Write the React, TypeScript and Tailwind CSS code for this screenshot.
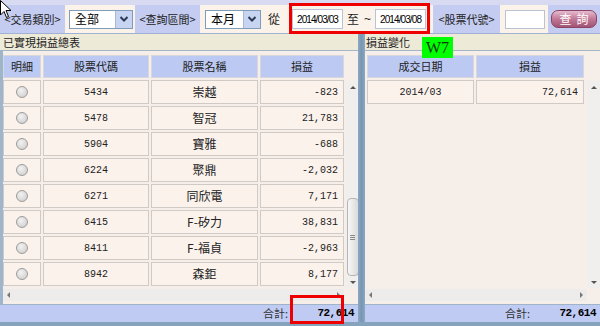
const cjk = "font-['Noto_Sans_CJK_TC','Noto_Sans',sans-serif]";
const mono = "font-['Liberation_Mono','DejaVu_Sans_Mono',monospace]";

const rows = [
  { code: "5434", name: "崇越", pl: "-823" },
  { code: "5478", name: "智冠", pl: "21,783" },
  { code: "5904", name: "寶雅", pl: "-688" },
  { code: "6224", name: "聚鼎", pl: "-2,032" },
  { code: "6271", name: "同欣電", pl: "7,171" },
  { code: "6415", name: "F-矽力", pl: "38,831" },
  { code: "8411", name: "F-福貞", pl: "-2,963" },
  { code: "8942", name: "森鉅", pl: "8,177" },
];

function Chevron() {
  return (
    <svg width="10" height="8" viewBox="0 0 10 8">
      <polyline points="1.5,2 5,5.5 8.5,2" fill="none" stroke="#2b3a55" strokeWidth="2" />
    </svg>
  );
}

function Select({ value, width }: { value: string; width: string }) {
  return (
    <div className={`${width} h-[19px] bg-white border border-[#7f9db9] flex items-center`}>
      <span className={`flex-1 pl-[5px] text-[12px] text-black ${cjk} leading-none`}>{value}</span>
      <div className="w-[17px] h-[17px] bg-[#c7d5f3] border-l border-[#aab8d8] flex items-center justify-center">
        <Chevron />
      </div>
    </div>
  );
}

function Label({ text, width }: { text: string; width: string }) {
  return (
    <div className={`${width} h-full bg-[#c4ccf1] flex items-center justify-center text-[11px] text-[#222] ${cjk}`}>
      {text}
    </div>
  );
}

function DateBox({ value }: { value: string }) {
  return (
    <div className="w-[51px] h-[20px] bg-white border border-[#b8c4d4] flex items-center justify-center text-[10px] tracking-[-0.9px] font-['Liberation_Sans',sans-serif] text-black whitespace-nowrap overflow-hidden">
      {value}
    </div>
  );
}

function Radio() {
  return (
    <div className="w-[12px] h-[12px] rounded-full border border-[#9c9c9c] bg-[radial-gradient(circle_at_40%_35%,#f2f2f2,#c9c9c9)]" />
  );
}

function VScroll({ thumb }: { thumb: boolean }) {
  return (
    <div className="w-[13px] h-full bg-[#f1efed] flex flex-col items-center">
      <div className="h-[12px] flex items-center justify-center">
        <div className="w-0 h-0 border-l-[3px] border-r-[3px] border-b-[3px] border-l-transparent border-r-transparent border-b-[#555]" />
      </div>
      <div className="flex-1 w-full flex flex-col justify-end">
        {thumb && (
          <div className="mx-auto w-[12px] h-[78px] rounded-[4px] border border-[#b4b4b4] bg-gradient-to-r from-[#f7f7f7] to-[#dadada] flex items-center justify-center">
            <div className="flex flex-col gap-[1px]">
              <div className="w-[5px] h-px bg-[#888]" />
              <div className="w-[5px] h-px bg-[#888]" />
              <div className="w-[5px] h-px bg-[#888]" />
            </div>
          </div>
        )}
      </div>
      <div className="h-[12px] flex items-center justify-center">
        <div className="w-0 h-0 border-l-[3px] border-r-[3px] border-t-[3px] border-l-transparent border-r-transparent border-t-[#555]" />
      </div>
    </div>
  );
}

function HScroll({ width }: { width: string }) {
  return (
    <div className="h-[12px] flex">
      <div className={`${width} h-full bg-[#eeecea] flex items-center justify-between px-[4px]`}>
        <div className="w-0 h-0 border-t-[3px] border-b-[3px] border-r-[3px] border-t-transparent border-b-transparent border-r-[#777]" />
        <div className="w-0 h-0 border-t-[3px] border-b-[3px] border-l-[3px] border-t-transparent border-b-transparent border-l-[#777]" />
      </div>
      <div className="flex-1 bg-[#f6efe9]" />
    </div>
  );
}

function Footer({ total }: { total: string }) {
  return (
    <div className="h-[18px] bg-[#bfcbf2] border-t border-[#9fb4c9] flex items-center justify-end">
      <span className={`text-[11px] text-[#333] ${cjk}`}>合計:</span>
      <span className={`w-[70px] pr-[4px] text-right text-[11px] font-bold text-black ${mono} tracking-[-0.5px]`}>{total}</span>
    </div>
  );
}

function Header({ text }: { text: string }) {
  return (
    <div className={`h-[23px] bg-[#bccaf3] border border-[#d7d7dc] flex items-center justify-center text-[11px] text-[#222] ${cjk}`}>
      {text}
    </div>
  );
}

function Cell({ children, right }: { children: React.ReactNode; right?: boolean }) {
  return (
    <div className={`h-[24px] bg-[#fbf2ec] border border-[#cfcac6] flex items-center ${right ? "justify-end pr-[5px]" : "justify-center"}`}>
      {children}
    </div>
  );
}

export default function App() {
  return (
    <div className="relative w-[600px] h-[326px] overflow-hidden bg-[#86a3bd] flex flex-col">
      {/* top strip */}
      <div className="h-[5px] bg-[#d8daf1]" />

      {/* toolbar */}
      <div className="h-[28px] flex bg-[#fbf3ea]">
        <Label text="<交易類別>" width="w-[65px]" />
        <div className="w-[70px] flex items-center pl-[4px]">
          <Select value="全部" width="w-[64px]" />
        </div>
        <Label text="<查詢區間>" width="w-[65px]" />
        <div className="w-[68px] flex items-center pl-[5px]">
          <Select value="本月" width="w-[56px]" />
        </div>
        <div className="w-[22px] flex items-center">
          <span className={`text-[12px] text-[#222] ${cjk}`}>從</span>
        </div>
        <div className="w-[143px] flex items-center pl-[2px]">
          <DateBox value="2014/03/03" />
          <span className={`ml-[4px] text-[12px] text-[#222] ${cjk}`}>至</span>
          <span className="ml-[5px] text-[12px] text-[#222] font-['Liberation_Sans',sans-serif]">~</span>
          <div className="ml-[4px]">
            <DateBox value="2014/03/08" />
          </div>
        </div>
        <Label text="<股票代號>" width="w-[67px]" />
        <div className="w-[48px] flex items-center pl-[5px]">
          <div className="w-[40px] h-[19px] bg-white border border-[#b8c4d4]" />
        </div>
        <div className="flex-1 bg-[#c4ccf1] flex items-center pl-[3px]">
          <div className={`w-[46px] h-[18px] rounded-[7px] border border-[#8b4464] bg-gradient-to-b from-[#e6bccf] via-[#c07896] to-[#a25474] flex items-center justify-center text-[12px] text-white tracking-[5px] pl-[5px] ${cjk}`}>
            查詢
          </div>
        </div>
      </div>

      {/* panels */}
      <div className="h-[289px] flex border-t border-[#9fb2d6]">
        {/* left */}
        <div className="w-[358px] flex flex-col">
          <div className={`h-[17px] bg-[#eeead8] border-b border-[#a3b5c6] flex items-center pl-[3px] text-[11px] text-[#222] ${cjk}`}>
            已實現損益總表
          </div>
          <div className="flex-1 flex flex-col border-l-[3px] border-[#9db6cc] bg-[#f6efe9]">
            <div className="flex h-[238px]">
              <div className="w-[341px] flex flex-col pt-[4px]">
                <div className="grid grid-cols-[38px_106px_107px_84px] gap-[2px]">
                  <Header text="明細" />
                  <Header text="股票代碼" />
                  <Header text="股票名稱" />
                  <Header text="損益" />
                </div>
                <div className="mt-[2px] grid grid-cols-[38px_106px_107px_84px] gap-[2px]">
                  {rows.flatMap((r) => [
                    <Cell key={r.code + "a"}>
                      <Radio />
                    </Cell>,
                    <Cell key={r.code + "b"}>
                      <span className={`text-[10px] text-[#222] ${mono}`}>{r.code}</span>
                    </Cell>,
                    <Cell key={r.code + "c"}>
                      <span className={`text-[12px] text-[#222] ${cjk}`}>{r.name}</span>
                    </Cell>,
                    <Cell key={r.code + "d"} right>
                      <span className={`text-[10px] text-[#222] ${mono}`}>{r.pl}</span>
                    </Cell>,
                  ])}
                </div>
              </div>
              <div className="flex-1 flex flex-col pl-[2px]">
                <div className="h-[30px]" />
                <div className="flex-1 pb-[1px]">
                  <VScroll thumb />
                </div>
              </div>
            </div>
            <HScroll width="w-[341px]" />
            <div className="flex-1" />
          </div>
          <Footer total="72,614" />
        </div>

        {/* separator */}
        <div className="w-[7px] bg-gradient-to-r from-[#8aa8c2] via-[#7896b2] to-[#8aa8c2]" />

        {/* right */}
        <div className="flex-1 flex flex-col">
          <div className={`h-[17px] bg-[#eeead8] border-b border-[#a3b5c6] flex items-center pl-[1px] text-[11px] text-[#222] ${cjk}`}>
            損益變化
          </div>
          <div className="flex-1 flex flex-col bg-[#f6efe9]">
            <div className="flex h-[238px]">
              <div className="w-[222px] flex flex-col pt-[4px] pl-[2px]">
                <div className="grid grid-cols-[107px_108px] gap-[2px]">
                  <Header text="成交日期" />
                  <Header text="損益" />
                </div>
                <div className="mt-[2px] grid grid-cols-[107px_108px] gap-[2px]">
                  <Cell>
                    <span className={`text-[10px] text-[#222] ${mono}`}>2014/03</span>
                  </Cell>
                  <Cell right>
                    <span className={`text-[10px] text-[#222] ${mono}`}>72,614</span>
                  </Cell>
                </div>
              </div>
              <div className="flex-1 flex flex-col">
                <div className="h-[30px]" />
                <div className="flex-1 pb-[1px]">
                  <VScroll thumb={false} />
                </div>
              </div>
            </div>
            <HScroll width="w-[222px]" />
            <div className="flex-1" />
          </div>
          <Footer total="72,614" />
        </div>
      </div>

      {/* annotations */}
      <div className="absolute left-[289px] top-[3px] w-[141px] h-[31px] border-[3px] border-[#ee0000]" />
      <div className="absolute left-[290px] top-[295px] w-[54px] h-[29px] border-[3px] border-[#ee0000]" />
      <div className="absolute left-[422px] top-[37px] w-[31px] h-[21px] bg-[#00ff00] flex items-center justify-center font-['Liberation_Serif',serif] text-[16px] text-[#0a3a0a]">
        W7
      </div>

      {/* mouse cursor */}
      <svg className="absolute left-0 top-0" width="12" height="19" viewBox="0 0 12 19">
        <path d="M0.5,0.5 L0.5,15 L4,11.5 L6.5,17.5 L8.5,16.5 L6,10.5 L11,10.5 Z" fill="white" stroke="black" strokeWidth="1" />
      </svg>
    </div>
  );
}
